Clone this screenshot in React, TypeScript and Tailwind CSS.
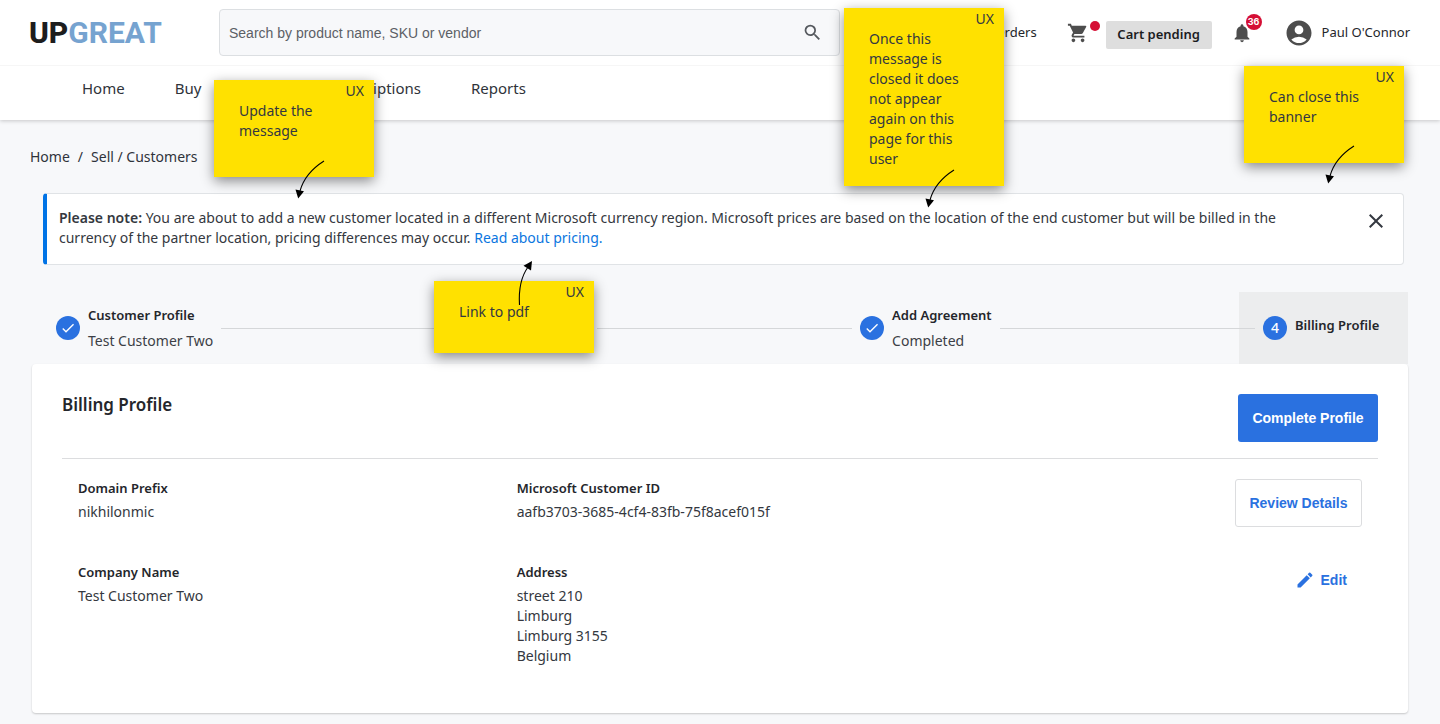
import type { ReactNode } from "react";
import {
  MdAccountCircle,
  MdCheck,
  MdClose,
  MdEdit,
  MdNotifications,
  MdSearch,
  MdShoppingCart,
} from "react-icons/md";

function Logo() {
  return (
    <a href="#" className="w-[190px] shrink-0 font-['Roboto',sans-serif] text-[30px] leading-8">
      <span className="font-extrabold text-[#1d1d1d]">UP</span>
      <span className="font-bold text-[#76a3d0]">GREAT</span>
    </a>
  );
}

function TopBar() {
  return (
    <div className="flex h-[66px] items-center border-b border-[#f6f6f6] pr-[30px] pl-[29px]">
      <Logo />
      <form className="flex h-[47px] w-[621px] items-center rounded border border-[#dcdfe2] bg-[#f7f8fa] pr-4 pl-[9px]">
        <input
          aria-label="Search products"
          placeholder="Search by product name, SKU or vendor"
          className="min-w-0 flex-1 bg-transparent font-['Liberation_Sans',Arial,sans-serif] text-sm outline-none placeholder:text-[#5c6066]"
        />
        <button type="button" aria-label="Search" className="text-[#55595e]">
          <MdSearch size={21} />
        </button>
      </form>
      <div className="ml-auto flex items-center text-[13px] text-[#24262b]">
        <a href="#" className="mr-[30px]">
          Orders
        </a>
        <a href="#" aria-label="Cart" className="relative mr-[17px] text-[#4d4d4d]">
          <MdShoppingCart size={22} />
          <span className="absolute -top-px left-[23px] size-[10px] rounded-full bg-[#d50f35]" />
        </a>
        <button className="mt-1 h-7 w-[106px] rounded-xs bg-[#dedede] text-[13px] font-semibold whitespace-nowrap text-[#1b1c1f]">
          Cart pending
        </button>
        <a href="#" aria-label="Notifications" className="relative ml-[19px] text-[#4d4d4d]">
          <MdNotifications size={22} />
          <span className="absolute -top-2 left-[15px] flex size-4 items-center justify-center rounded-full bg-[#d50f35] font-['Inter',sans-serif] text-[9px] font-bold text-white">
            36
          </span>
        </a>
        <a href="#" className="ml-[31px] flex items-center gap-2">
          <MdAccountCircle size={30} className="text-[#4d4d4d]" />
          Paul O'Connor
        </a>
      </div>
    </div>
  );
}

function MainNav() {
  return (
    <nav className="flex h-[54px] gap-[50px] pt-[10px] pl-[82px] text-[15px] leading-6 text-[#2f333a]">
      <a href="#">Home</a>
      <a href="#">Buy</a>
      <a href="#">Sell</a>
      <a href="#">Subscriptions</a>
      <a href="#">Reports</a>
    </nav>
  );
}

function Banner() {
  return (
    <section className="mr-1 ml-[11px] flex h-[72px] items-start rounded border border-l-4 border-[#e0e3e6] border-l-[#0073e6] bg-white pt-[14px] pr-[15px] pl-3">
      <p className="mr-auto max-w-[1260px] text-sm leading-5 text-[#343840]">
        <strong className="font-semibold">Please note:</strong> You are about to add a new customer located in a
        different Microsoft currency region. Microsoft prices are based on the location of the end customer but will be
        billed in the currency of the partner location, pricing differences may occur.{" "}
        <a href="#" className="text-[#0b76e0]">
          Read about pricing.
        </a>
      </p>
      <button aria-label="Close" className="pt-px text-[#343840]">
        <MdClose size={24} />
      </button>
    </section>
  );
}

function Step({ title, note, marker, active }: { title: string; note?: string; marker: ReactNode; active?: boolean }) {
  return (
    <li
      className={
        active
          ? "flex h-full min-w-[169px] items-center gap-2 bg-[#ecedee] px-6"
          : "flex h-full items-center gap-2 px-6"
      }
    >
      <span className="flex size-6 shrink-0 items-center justify-center rounded-full bg-[#2a71e0] text-sm font-medium text-white">
        {marker}
      </span>
      <div className={active ? "pb-[6px] whitespace-nowrap" : "pb-px whitespace-nowrap"}>
        <p className="text-[13px] leading-[25px] font-semibold text-[#24262b]">{title}</p>
        {note && <p className="text-sm leading-[25px] text-[#3c3f46]">{note}</p>}
      </div>
    </li>
  );
}

function StepLine() {
  return <li aria-hidden="true" className="z-10 -mx-4 h-px flex-1 bg-[#d5d7d9]" />;
}

function Stepper() {
  const check = <MdCheck size={16} />;
  return (
    <ol className="mt-[27px] flex h-[72px] items-center">
      <Step title="Customer Profile" note="Test Customer Two" marker={check} />
      <StepLine />
      <Step title="Domain" note="Completed" marker={check} />
      <StepLine />
      <Step title="Add Agreement" note="Completed" marker={check} />
      <StepLine />
      <Step title="Billing Profile" marker="4" active />
    </ol>
  );
}

function Field({ label, lines }: { label: string; lines: string[] }) {
  return (
    <div className="px-4 text-sm leading-5">
      <dt className="mb-1 text-[13px] leading-5 font-semibold text-[#24262b]">{label}</dt>
      {lines.map((line) => (
        <dd key={line} className="text-[#343840]">
          {line}
        </dd>
      ))}
    </div>
  );
}

function BillingCard() {
  return (
    <section className="h-[349px] rounded bg-white px-[30px] pt-[30px] shadow-[0_1px_2px_rgba(0,0,0,0.2)]">
      <div className="flex items-start justify-between border-b border-[#dcdddf] pb-4">
        <h1 className="text-[17px] leading-[22px] font-semibold text-[#24262b]">Billing Profile</h1>
        <button className="h-12 w-[140px] rounded-[3px] bg-[#2a71e0] font-['Liberation_Sans',Arial,sans-serif] text-sm font-bold whitespace-nowrap text-white">
          Complete Profile
        </button>
      </div>
      <dl className="grid grid-cols-3 pt-[19px]">
        <Field label="Domain Prefix" lines={["nikhilonmic"]} />
        <Field label="Microsoft Customer ID" lines={["aafb3703-3685-4cf4-83fb-75f8acef015f"]} />
        <div className="flex h-[84px] items-start justify-end pt-px pr-4">
          <button className="h-12 w-[127px] rounded-[3px] border border-[#dcdddf] bg-white font-['Liberation_Sans',Arial,sans-serif] text-sm font-bold whitespace-nowrap text-[#2a71e0]">
            Review Details
          </button>
        </div>
        <Field label="Company Name" lines={["Test Customer Two"]} />
        <Field label="Address" lines={["street 210", "Limburg", "Limburg 3155", "Belgium"]} />
        <div className="flex items-start justify-end pt-2 pr-[31px]">
          <button className="flex items-center gap-[6px] font-['Liberation_Sans',Arial,sans-serif] text-sm font-bold text-[#2a71e0]">
            <MdEdit size={20} />
            Edit
          </button>
        </div>
      </dl>
    </section>
  );
}

function StickyNote({ children, place }: { children: ReactNode; place: string }) {
  return (
    <aside
      className={`absolute z-20 w-40 bg-[#ffe100] pt-[21px] pr-9 pl-[25px] text-sm leading-5 text-[#343840] shadow-[0_4px_12px_rgba(0,0,0,0.45)] ${place}`}
    >
      <span className="absolute top-px right-[10px]">UX</span>
      {children}
    </aside>
  );
}

function DownArrow({ place }: { place: string }) {
  return (
    <svg className={`absolute h-10 w-8 overflow-visible ${place}`} viewBox="0 0 32 40" aria-hidden="true">
      <path d="M28 2Q9 14 4 32" fill="none" stroke="#000" strokeWidth="1.1" />
      <path d="M-0.5 30.5L8 32.2L2.2 39.5Z" fill="#000" />
    </svg>
  );
}

export default function App() {
  return (
    <div className="relative min-h-screen overflow-x-hidden bg-[#f7f8fa] pb-[11px] font-['Noto_Sans',sans-serif]">
      <header className="bg-white shadow-[0_1px_4px_rgba(0,0,0,0.2)]">
        <TopBar />
        <MainNav />
      </header>
      <main className="px-8">
        <nav aria-label="Breadcrumb" className="-ml-[2px] flex h-[73px] gap-2 pt-[27px] text-sm leading-5 text-[#2f333a]">
          <a href="#">Home</a>
          <span>/</span>
          <a href="#">Sell / Customers</a>
        </nav>
        <Banner />
        <Stepper />
        <BillingCard />
      </main>

      <StickyNote place="top-20 left-[214px] h-[97px]">
        Update the message
        <DownArrow place="top-[79px] left-[82px]" />
      </StickyNote>
      <StickyNote place="top-2 right-[436px] h-[178px]">
        Once this message is closed it does not appear again on this page for this user
        <DownArrow place="top-[160px] left-[82px]" />
      </StickyNote>
      <StickyNote place="top-[66px] right-9 h-[97px]">
        Can close this banner
        <DownArrow place="top-[78px] left-[82px]" />
      </StickyNote>
      <StickyNote place="top-[281px] left-[434px] h-[72px]">
        Link to pdf
        <svg
          className="absolute -top-5 left-[84px] h-12 w-4 overflow-visible"
          viewBox="0 0 16 48"
          aria-hidden="true"
        >
          <path d="M1.5 44Q0 20 10 6" fill="none" stroke="#000" strokeWidth="1.1" />
          <path d="M5.5 4.8L14 0L13 9.5Z" fill="#000" />
        </svg>
      </StickyNote>
    </div>
  );
}
